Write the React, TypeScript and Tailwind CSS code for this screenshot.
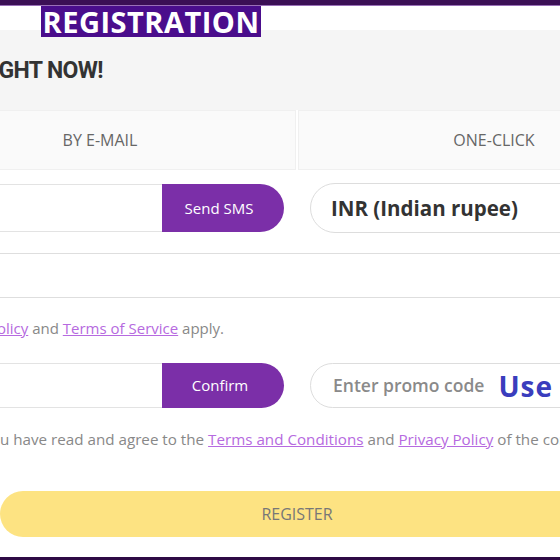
import React from "react";

const sans = "font-['Open_Sans',sans-serif]";

export default function App() {
  return (
    <div className={`relative w-[560px] h-[560px] overflow-hidden bg-white ${sans}`}>
      {/* top bar */}
      <div className="h-[5px] bg-[#3b0f55]" />
      <div className="h-px bg-[#9a6fb8]" />
      <div className="h-[24px] bg-white" />

      {/* floating label */}
      <div className="absolute left-[41px] top-[6px] h-[31px] w-[220px] bg-[#4a0d8c] flex items-center justify-center text-white text-[29px] font-bold leading-none tracking-[0.5px]">
        REGISTRATION
      </div>

      {/* heading band */}
      <div className="h-[80px] bg-[#f5f5f5] flex items-center">
        <div className="w-[103px] flex justify-end whitespace-nowrap font-['Roboto',sans-serif] font-bold text-[23px] tracking-[-0.6px] text-[#333] pt-[2px]">
          REGISTER RIGHT NOW!
        </div>
      </div>

      <div className="ml-[-96px] w-[786px]">
        {/* tabs */}
        <div className="flex gap-[2px] h-[60px]">
          <div className="w-[392px] bg-[#fafafa] border border-[#f0f0f0] flex items-center justify-center text-[16px] text-[#666]">
            BY E-MAIL
          </div>
          <div className="w-[392px] bg-[#fafafa] border border-[#f0f0f0] flex items-center justify-center text-[16px] text-[#666]">
            ONE-CLICK
          </div>
        </div>

        {/* phone + currency */}
        <div className="flex gap-[26px] mt-[13px] items-center">
          <div className="w-[380px] flex h-[48px]">
            <div className="flex-1 border-y border-[#e3e3e3]" />
            <button className="w-[122px] bg-[#7b2fa8] text-white text-[15px] rounded-r-full pr-[8px]">
              Send SMS
            </button>
          </div>
          <div className="w-[380px] h-[50px] border border-[#ddd] rounded-full flex items-center pl-[20px] text-[20.5px] font-bold text-[#333]">
            INR (Indian rupee)
          </div>
        </div>

        {/* password */}
        <div className="mt-[20px] h-[45px] border-y border-[#dedede]" />
      </div>

      {/* recaptcha note */}
      <div className="mt-[19px] h-[22px] flex items-center">
        <div className="w-[224px] flex justify-end whitespace-nowrap text-[15px] text-[#888]">
          <span>
            This site is protected by reCAPTCHA and the Google{" "}
            <a className="text-[#b66ae0] underline">Privacy Policy</a> and{" "}
            <a className="text-[#b66ae0] underline">Terms of Service</a> apply.
          </span>
        </div>
      </div>

      <div className="ml-[-96px] w-[786px]">
        {/* promo row */}
        <div className="flex gap-[26px] mt-[24px] items-center">
          <div className="w-[380px] flex h-[45px]">
            <div className="flex-1 border-y border-[#e3e3e3]" />
            <button className="w-[122px] bg-[#7b2fa8] text-white text-[15px] rounded-r-full pr-[6px]">
              Confirm
            </button>
          </div>
          <div className="w-[380px] h-[45px] border border-[#ddd] rounded-full flex items-center pl-[22px] whitespace-nowrap">
            <span className="text-[17.5px] font-semibold text-[#8a8a8a]">Enter promo code</span>
            <span className="ml-[14px] text-[28px] font-bold text-[#3a3dbd] tracking-[1px] leading-none">Use</span>
          </div>
        </div>
      </div>

      {/* agreement */}
      <div className="mt-[20px] h-[22px] flex items-center whitespace-nowrap text-[15.2px] text-[#888]">
        <div className="w-0 flex justify-end">
          <span>By clicking this button you confirm that yo</span>
        </div>
        <span>
          u have read and agree to the{" "}
          <a className="text-[#b66ae0] underline">Terms and Conditions</a> and{" "}
          <a className="text-[#b66ae0] underline">Privacy Policy</a> of the company
        </span>
      </div>

      {/* register */}
      <button className="mt-[41px] h-[46px] w-[594px] rounded-full bg-[#fde382] text-[16px] text-[#777] block">
        REGISTER
      </button>

      <div className="absolute left-0 bottom-0 w-full h-[3px] bg-[#2e0b45]" />
    </div>
  );
}
